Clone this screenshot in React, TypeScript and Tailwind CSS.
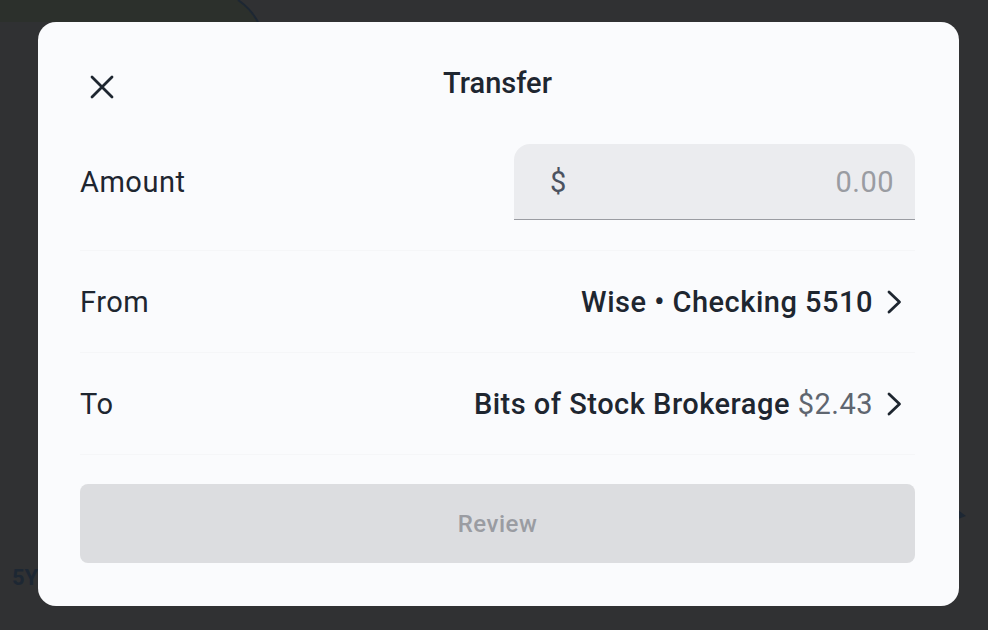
import { useState } from "react"

const Chevron = () => (
    <svg width="18" height="26" viewBox="0 0 18 26" fill="none" className="shrink-0">
        <polyline points="4,3 14.5,13 4,23" stroke="#1e2630" strokeWidth="2.8" strokeLinecap="round" strokeLinejoin="round" />
    </svg>
)

const Row = ({ label, children }: { label: string; children: React.ReactNode }) => (
    <div className="flex items-center justify-between h-[102px] border-b border-[#f5f6f8]">
        <span className="text-[#1e2630]">{label}</span>
        <div className="flex items-center gap-[12px] pr-[12px]">{children}</div>
    </div>
)

const App = () => {
    const [amount, setAmount] = useState("")

    return (
        <div className="relative w-full h-[630px] overflow-hidden bg-[#303133] font-['Roboto',sans-serif]">
            {/* page behind the dim layer */}
            <svg className="absolute left-0 top-0" width="988" height="630" viewBox="0 0 988 630">
                <path d="M0 0 H238 Q250 10 257 22 H0 Z" fill="#2c302c" />
                <path d="M238 0 Q251 9 258 22" stroke="#1d2733" strokeWidth="2" fill="none" />
                <path d="M958 510 L966 516 L958 519 Z" fill="#1d2733" />
            </svg>
            <span className="absolute left-[12px] top-[561px] text-[22px] font-bold text-[#1d2733]">5Y</span>

            {/* modal */}
            <div className="relative ml-[38px] mt-[22px] w-[921px] h-[584px] rounded-[18px] bg-[#fafbfd] pl-[42px] pr-[44px] pt-[44px] text-[29px] leading-[34px] tracking-[0.5px]">
                <div className="relative flex h-[66px] items-start justify-center">
                    <button className="absolute left-[10px] top-[9px] flex h-[24px] w-[24px] items-center justify-center">
                        <svg width="24" height="24" viewBox="0 0 24 24" fill="none">
                            <path d="M2 2 L22 22 M22 2 L2 22" stroke="#1e2630" strokeWidth="2.8" strokeLinecap="round" />
                        </svg>
                    </button>
                    <h2 className="font-medium tracking-normal text-[#1e2630]">Transfer</h2>
                </div>

                <div className="flex items-center justify-between h-[76px] mt-[12px]">
                    <span className="text-[#1e2630]">Amount</span>
                    <label className="flex h-[76px] w-[401px] items-center justify-between rounded-t-[16px] border-b-[1.5px] border-[#9a9ca2] bg-[#ebecef] pl-[36px] pr-[21px]">
                        <span className="text-[#4b5260]">$</span>
                        <input
                            value={amount}
                            onChange={(e) => setAmount(e.target.value)}
                            placeholder="0.00"
                            className="w-[200px] bg-transparent text-right text-[#1e2630] outline-none placeholder:text-[#9a9ca2]"
                        />
                    </label>
                </div>

                <div className="mt-[30px] border-t border-[#f5f6f8]">
                    <Row label="From">
                        <span className="font-medium text-[#1e2630]">Wise • Checking 5510</span>
                        <Chevron />
                    </Row>
                    <Row label="To">
                        <span className="font-medium text-[#1e2630]">
                            Bits of Stock Brokerage <span className="font-normal text-[#5f6670]">$2.43</span>
                        </span>
                        <Chevron />
                    </Row>
                </div>

                <button
                    disabled
                    className="mt-[29px] flex h-[79px] w-full items-center justify-center rounded-[8px] bg-[#dcdde0] text-[24px] font-medium tracking-[0.5px] text-[#9a9ca2]"
                >
                    Review
                </button>
            </div>
        </div>
    )
}

export default App
